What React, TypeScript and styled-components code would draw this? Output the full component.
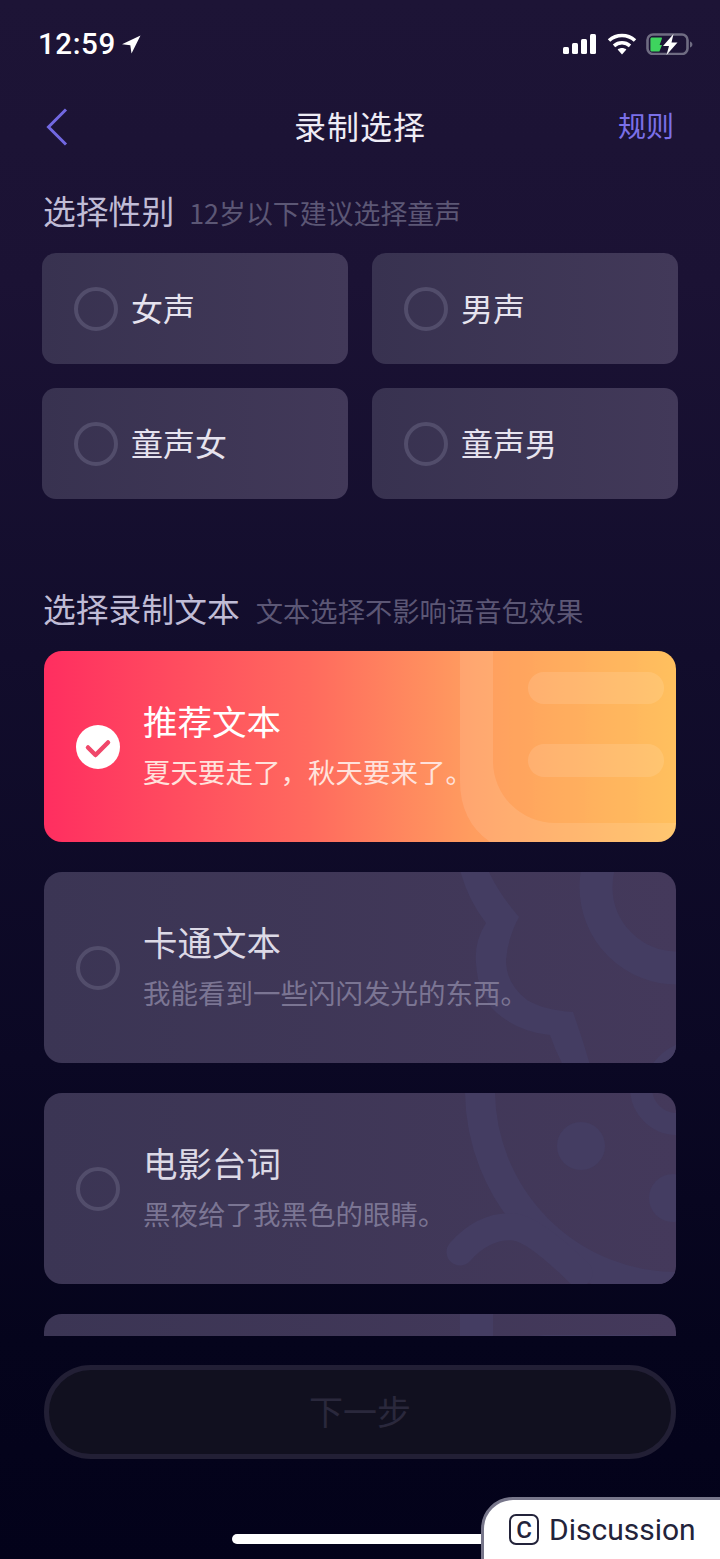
import React from "react";
import styled, { createGlobalStyle } from "styled-components";

const Global = createGlobalStyle`
  html, body { margin: 0; padding: 0; background: #03021a; }
  * { box-sizing: border-box; }
`;

const cjk = `"Noto Sans CJK SC", "Noto Sans", sans-serif`;

const Page = styled.div`
  position: relative;
  width: 720px;
  height: 1559px;
  overflow: hidden;
  font-family: ${cjk};
  background: linear-gradient(180deg, #1d1436 0%, #1b1234 18%, #120d2c 42%, #0b0824 68%, #05041c 86%, #03021a 100%);
`;

const StatusBar = styled.div`
  height: 88px;
  padding: 20px 27px 0 38px;
  display: flex;
  justify-content: space-between;
  align-items: flex-start;
`;

const StatusGroup = styled.div`
  height: 48px;
  display: flex;
  align-items: center;
`;

const Time = styled.span`
  font-family: Roboto, "Liberation Sans", sans-serif;
  font-size: 29.5px;
  font-weight: 500;
  letter-spacing: 0.6px;
  color: #fff;
  margin-right: 6px;
`;

const Nav = styled.header`
  height: 78px;
  padding: 0 46px;
  display: grid;
  grid-template-columns: 1fr auto 1fr;
  align-items: center;
`;

const Back = styled.span`
  display: flex;
  align-items: center;
`;

const Title = styled.h1`
  margin: 0;
  padding-bottom: 4px;
  font-size: 32px;
  font-weight: 400;
  letter-spacing: 1px;
  color: #eeecf5;
`;

const Rules = styled.span`
  justify-self: end;
  padding-bottom: 4px;
  font-size: 28px;
  color: #7b70e8;
`;

const Section = styled.section<{ $gap: number }>`
  padding: ${(p) => p.$gap}px 42px 0;
`;

const SectionHead = styled.div`
  height: 44px;
  margin-bottom: 19px;
  padding-left: 1px;
  display: flex;
  align-items: center;
  white-space: nowrap;
`;

const HeadText = styled.h2`
  margin: 0;
  padding-bottom: 5px;
  font-size: 32.8px;
  font-weight: 400;
  color: #c0bcd6;
`;

const HeadHint = styled.span<{ $size: number; $gap: number }>`
  margin-left: ${(p) => p.$gap}px;
  font-size: ${(p) => p.$size}px;
  color: #5c5775;
`;

const GenderGrid = styled.div`
  display: grid;
  grid-template-columns: 306px 306px;
  gap: 24px;
`;

const GenderOption = styled.div`
  height: 111px;
  padding-left: 32px;
  display: flex;
  align-items: center;
  gap: 13px;
  border-radius: 14px;
  background: linear-gradient(90deg, #383250 0%, #423959 100%);
`;

const GenderLabel = styled.span`
  padding-bottom: 4px;
  font-size: 32px;
  color: #e6e3ee;
`;

const Radio = styled.span`
  flex: none;
  width: 44px;
  height: 44px;
  border-radius: 50%;
  border: 4px solid #524d6b;
`;

const CheckMark = styled.svg`
  flex: none;
  display: block;
`;

const Scroller = styled.div`
  height: 685px;
  margin: 0 2px;
  overflow: hidden;
  display: flex;
  flex-direction: column;
  gap: 30px;
`;

const Card = styled.article<{ $active?: boolean }>`
  position: relative;
  flex: none;
  height: 191px;
  padding-left: 32px;
  display: flex;
  align-items: center;
  gap: 23px;
  overflow: hidden;
  border-radius: 18px;
  background: ${(p) =>
    p.$active
      ? "linear-gradient(90deg, #ff2e60 0%, #ff6a5e 42%, #ff9d5f 68%, #ffc05f 100%)"
      : "linear-gradient(90deg, #3b3554 0%, #44395b 100%)"};
`;

const Decor = styled.svg`
  position: absolute;
  inset: 0;
  width: 632px;
  height: 191px;
`;

const CardText = styled.div`
  position: relative;
  padding-bottom: 7px;
  display: flex;
  flex-direction: column;
`;

const CardTitle = styled.h3<{ $active?: boolean }>`
  margin: 0 0 6px;
  font-size: 34.5px;
  line-height: 50px;
  font-weight: 400;
  color: ${(p) => (p.$active ? "#fff" : "#dcd9e6")};
`;

const CardSub = styled.p<{ $active?: boolean }>`
  margin: 0;
  font-size: 27.5px;
  line-height: 40px;
  color: ${(p) => (p.$active ? "#ffe2dc" : "#7b7593")};
`;

const NextButton = styled.button`
  display: block;
  width: 632px;
  height: 94px;
  margin: 29px 44px 0;
  padding: 0 0 4px;
  border-radius: 47px;
  border: 5px solid #221f35;
  background: #11101f;
  font-family: ${cjk};
  font-size: 34px;
  color: #2a283c;
`;

const HomeBar = styled.div`
  position: absolute;
  left: 232px;
  top: 1534px;
  width: 260px;
  height: 10px;
  border-radius: 5px;
  background: #fff;
`;

const DiscussionTab = styled.div`
  position: absolute;
  left: 481px;
  top: 1497px;
  width: 245px;
  height: 70px;
  padding: 14px 0 0 25px;
  display: flex;
  align-items: flex-start;
  gap: 10px;
  background: #fff;
  border: 3px solid #77768a;
  border-radius: 32px 0 0 0;
  font-family: Roboto, "Open Sans", sans-serif;
  font-size: 30px;
  line-height: 32px;
  color: #23233a;
`;

const DiscussionIcon = styled.span`
  flex: none;
  width: 30px;
  height: 31px;
  border: 2.5px solid #23233a;
  border-radius: 7px;
  display: flex;
  align-items: center;
  justify-content: center;
  font-size: 24px;
  font-weight: 500;
  line-height: 1;
`;

const Signal = () => (
  <svg width="34" height="20" viewBox="0 0 34 20" style={{ marginRight: 10 }}>
    <rect x="0" y="13" width="6" height="7" rx="1.5" fill="#fff" />
    <rect x="9" y="9" width="6" height="11" rx="1.5" fill="#fff" />
    <rect x="18" y="5" width="6" height="15" rx="1.5" fill="#fff" />
    <rect x="27" y="0" width="6" height="20" rx="1.5" fill="#fff" />
  </svg>
);

const Wifi = () => (
  <svg width="30" height="22" viewBox="0 0 30 22" style={{ marginRight: 9 }}>
    <path d="M2 7.5C9.5 .8 20.5 .8 28 7.5" stroke="#fff" strokeWidth="3.6" fill="none" />
    <path d="M7 12.8c4.7-4 11.3-4 16 0" stroke="#fff" strokeWidth="3.6" fill="none" />
    <path d="M10.6 16.6c2.700-2 6.100-2 8.800 0L15 21.500z" fill="#fff" />
  </svg>
);

const Battery = () => (
  <svg width="47" height="22" viewBox="0 0 47 22">
    <rect x="1.5" y="1.500" width="40" height="19.500" rx="5.5" fill="none" stroke="#6f6c82" strokeWidth="2.6" />
    <path d="M44 8.500c1.600.5 2.400 1.600 2.400 3s-.8 2.500-2.400 3z" fill="#6f6c82" />
    <path d="M6 4.500h9c1 0 1.200.6.8 1.600l-2.200 5.900h2.400l-2.600 6.500H6c-1 0-1.600-.6-1.600-1.600V6.100c0-1 .6-1.600 1.600-1.600z" fill="#3ed45e" />
    <path d="M27.500 1 17 13h6l-2.500 9L31.500 9.500h-6z" fill="#fff" />
  </svg>
);

const Locate = () => (
  <svg width="19" height="19" viewBox="0 0 19 19">
    <path d="M18.500.5 0 9.300l8.300.9 1.200 8.300z" fill="#fff" />
  </svg>
);

const ink = "#443d62";

const WavesDecor = () => (
  <Decor viewBox="0 0 632 191">
    <path
      d="M416 -2Q424 28 442 51Q430 70 432 91Q434 125 453 141Q475 160 506 163Q511 178 519 193H546Q538 165 529 140Q500 138 483 128Q462 112 462 88Q464 65 475 45Q455 22 444 -2Z"
      fill={ink}
    />
    <circle cx="633" cy="15" r="81" fill="none" stroke={ink} strokeWidth="33" />
    <circle cx="655" cy="225" r="57" fill={ink} />
  </Decor>
);

const MoonDecor = () => (
  <Decor viewBox="0 0 632 191">
    <circle cx="633" cy="-3" r="197" fill="none" stroke={ink} strokeWidth="30" />
    <path d="M416 159Q440 132 470 134Q490 136 535 180" fill="none" stroke={ink} strokeWidth="27" strokeLinecap="round" />
    <circle cx="537" cy="53" r="24" fill={ink} />
    <circle cx="629" cy="105" r="24" fill={ink} />
    <circle cx="633" cy="-5" r="36" fill="none" stroke={ink} strokeWidth="22" />
  </Decor>
);

const ListDecor = ({ color, opacity }: { color: string; opacity: number }) => (
  <Decor viewBox="0 0 632 191">
    <g fill={color} opacity={opacity}>
      <path d="M416 -5H449V110A62 62 0 0 0 511 172H632V191H446Q416 170 416 130Z" />
      <rect x="484" y="21" width="136" height="32" rx="16" />
      <rect x="484" y="93" width="136" height="33" rx="16.500" />
    </g>
  </Decor>
);

export default function App() {
  return (
    <Page>
      <Global />
      <StatusBar>
        <StatusGroup>
          <Time>12:59</Time>
          <Locate />
        </StatusGroup>
        <StatusGroup>
          <Signal />
          <Wifi />
          <Battery />
        </StatusGroup>
      </StatusBar>

      <Nav>
        <Back>
          <svg width="22" height="38" viewBox="0 0 22 38">
            <path d="M20 1.500 2.500 19 20 36.500" fill="none" stroke="#7268e2" strokeWidth="3" />
          </svg>
        </Back>
        <Title>录制选择</Title>
        <Rules>规则</Rules>
      </Nav>

      <Section $gap={24}>
        <SectionHead>
          <HeadText>选择性别</HeadText>
          <HeadHint $size={26.9} $gap={15}>12岁以下建议选择童声</HeadHint>
        </SectionHead>
        <GenderGrid>
          {["女声", "男声", "童声女", "童声男"].map((label) => (
            <GenderOption key={label}>
              <Radio />
              <GenderLabel>{label}</GenderLabel>
            </GenderOption>
          ))}
        </GenderGrid>
      </Section>

      <Section $gap={89}>
        <SectionHead>
          <HeadText>选择录制文本</HeadText>
          <HeadHint $size={27.3} $gap={16}>文本选择不影响语音包效果</HeadHint>
        </SectionHead>
        <Scroller>
          <Card $active>
            <ListDecor color="#fff" opacity={0.11} />
            <CheckMark width="44" height="44" viewBox="0 0 44 44">
              <circle cx="22" cy="22" r="22" fill="#fff" />
              <path d="M12 22.500 19.500 30 32 17.500" fill="none" stroke="#f0476a" strokeWidth="4.500" strokeLinecap="round" strokeLinejoin="round" />
            </CheckMark>
            <CardText>
              <CardTitle $active>推荐文本</CardTitle>
              <CardSub $active>夏天要走了，秋天要来了。</CardSub>
            </CardText>
          </Card>
          <Card>
            <WavesDecor />
            <Radio />
            <CardText>
              <CardTitle>卡通文本</CardTitle>
              <CardSub>我能看到一些闪闪发光的东西。</CardSub>
            </CardText>
          </Card>
          <Card>
            <MoonDecor />
            <Radio />
            <CardText>
              <CardTitle>电影台词</CardTitle>
              <CardSub>黑夜给了我黑色的眼睛。</CardSub>
            </CardText>
          </Card>
          <Card>
            <ListDecor color={ink} opacity={1} />
          </Card>
        </Scroller>
      </Section>

      <NextButton>下一步</NextButton>

      <HomeBar />
      <DiscussionTab>
        <DiscussionIcon>C</DiscussionIcon>
        Discussion
      </DiscussionTab>
    </Page>
  );
}
